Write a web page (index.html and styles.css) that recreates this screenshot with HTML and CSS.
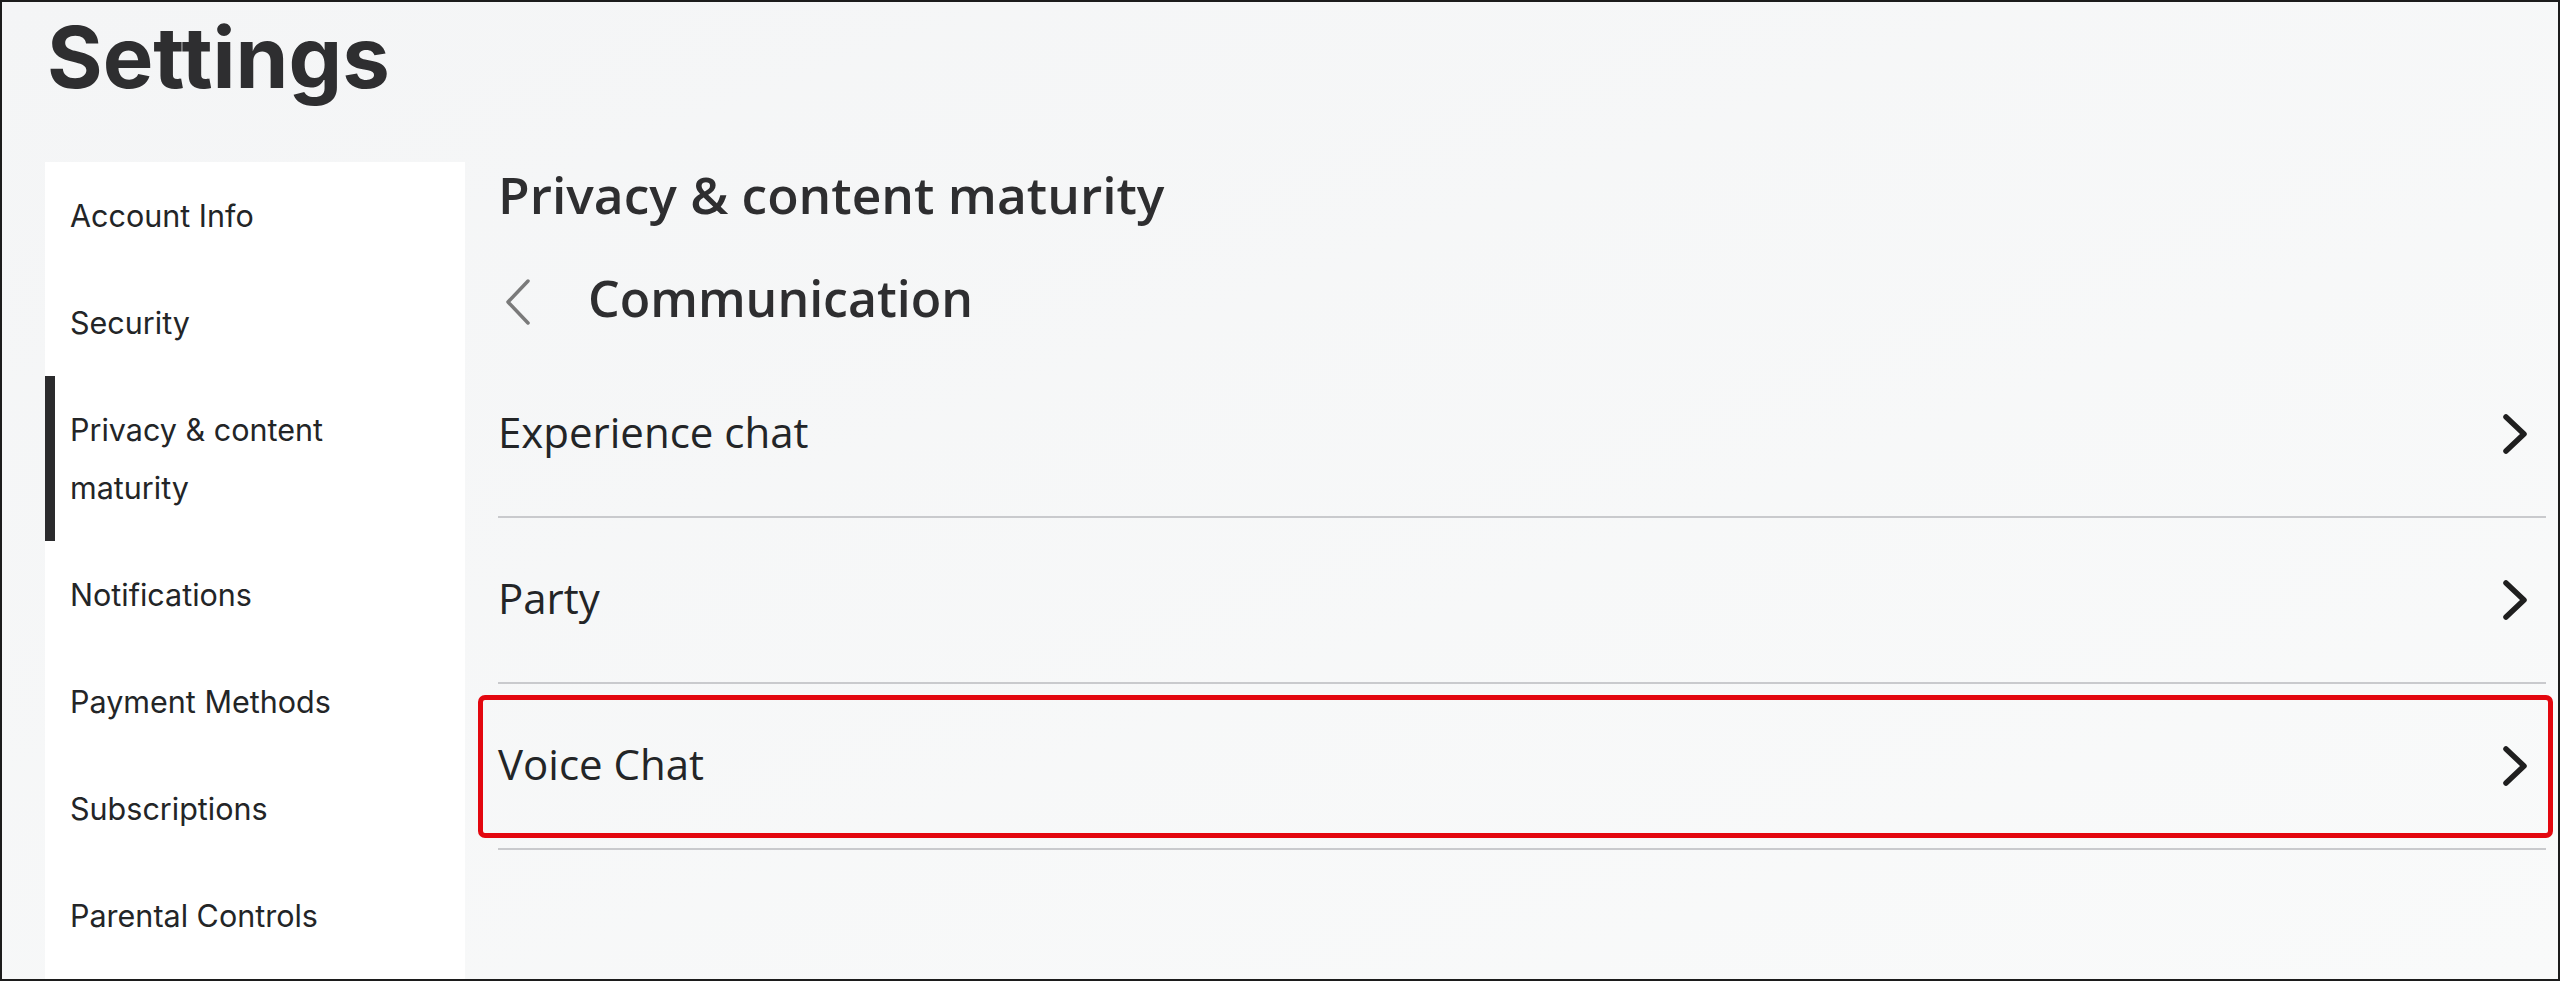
FILE: index.html
```html
<!DOCTYPE html>
<html>
<head>
    <link rel="stylesheet" href="styles.css">
</head>
<body>
    <div class="page">
        <h1 class="page-title">Settings</h1>
        <div class="layout">
            <ul class="side-nav">
                <li class="nav-item">Account Info</li>
                <li class="nav-item">Security</li>
                <li class="nav-item active">Privacy &amp; content<br>maturity</li>
                <li class="nav-item">Notifications</li>
                <li class="nav-item">Payment Methods</li>
                <li class="nav-item">Subscriptions</li>
                <li class="nav-item">Parental Controls</li>
            </ul>
            <div class="content">
                <h2 class="section-title">Privacy &amp; content maturity</h2>
                <div class="sub-header">
                    <svg class="back-icon" viewBox="0 0 28 48" width="28" height="48">
                        <path d="M24 3 L4 24 L24 45" fill="none" stroke="#7a7a7a" stroke-width="3.5" stroke-linecap="round" stroke-linejoin="round"/>
                    </svg>
                    <h3 class="sub-title">Communication</h3>
                </div>
                <div class="option-list">
                    <div class="option-row">
                        <span class="option-label">Experience chat</span>
                        <svg class="chevron" viewBox="0 0 26 42" width="26" height="42">
                            <path d="M4 4 L22 21 L4 38" fill="none" stroke="#1f1f1f" stroke-width="5.5" stroke-linecap="round" stroke-linejoin="round"/>
                        </svg>
                    </div>
                    <div class="option-row">
                        <span class="option-label">Party</span>
                        <svg class="chevron" viewBox="0 0 26 42" width="26" height="42">
                            <path d="M4 4 L22 21 L4 38" fill="none" stroke="#1f1f1f" stroke-width="5.5" stroke-linecap="round" stroke-linejoin="round"/>
                        </svg>
                    </div>
                    <div class="option-row highlighted">
                        <span class="option-label">Voice Chat</span>
                        <svg class="chevron" viewBox="0 0 26 42" width="26" height="42">
                            <path d="M4 4 L22 21 L4 38" fill="none" stroke="#1f1f1f" stroke-width="5.5" stroke-linecap="round" stroke-linejoin="round"/>
                        </svg>
                    </div>
                </div>
            </div>
        </div>
    </div>
</body>
</html>
```

FILE: styles.css
```css
html, body {
    margin: 0;
    padding: 0;
}
body {
    width: 2560px;
    height: 981px;
    overflow: hidden;
    background: #f6f7f8;
    color: #232527;
}
.page {
    box-sizing: border-box;
    width: 2560px;
    height: 981px;
    border: 2px solid #1c1c1c;
    background: linear-gradient(to bottom right, #f4f5f6, #f9fafa);
    overflow: hidden;
}
.page-title {
    margin: 0;
    padding: 0 0 0 45px;
    height: 160px;
    font-family: "Inter", sans-serif;
    font-weight: 700;
    font-size: 85px;
    line-height: 112px;
    color: #2e2e30;
}
.layout {
    display: flex;
    align-items: stretch;
    height: 819px;
}
.side-nav {
    list-style: none;
    margin: 0 0 0 43px;
    padding: 0;
    width: 420px;
    background: #ffffff;
}
.nav-item {
    border-left: 10px solid transparent;
    padding: 25px 0 24px 15px;
    font-family: "Inter", sans-serif;
    font-size: 30.5px;
    line-height: 58px;
    color: #232527;
}
.nav-item.active {
    border-left-color: #2b2b2d;
}
.content {
    flex: 1;
    margin: 0 12px 0 33px;
}
.section-title {
    margin: 0;
    height: 100px;
    font-family: "Open Sans", sans-serif;
    font-weight: 600;
    font-size: 51.5px;
    line-height: 64px;
    color: #2e2e30;
}
.sub-header {
    display: flex;
    align-items: center;
    box-sizing: border-box;
    height: 90px;
    padding-bottom: 10px;
}
.back-icon {
    margin-left: 6px;
}
.sub-title {
    margin: 0 0 0 56px;
    padding-bottom: 8px;
    font-family: "Open Sans", sans-serif;
    font-weight: 600;
    font-size: 50px;
    color: #2e2e30;
}
.option-row {
    position: relative;
    display: flex;
    align-items: center;
    justify-content: space-between;
    height: 164px;
    border-bottom: 2px solid #c9cacd;
}
.option-label {
    padding-bottom: 6px;
    font-family: "Open Sans", sans-serif;
    font-size: 42px;
    color: #232527;
}
.chevron {
    margin-right: 18px;
}
.option-row.highlighted::after {
    content: "";
    position: absolute;
    top: 11px;
    bottom: 10px;
    left: -20px;
    right: -7px;
    border: 5px solid #e3070f;
    border-radius: 7px;
}
```
